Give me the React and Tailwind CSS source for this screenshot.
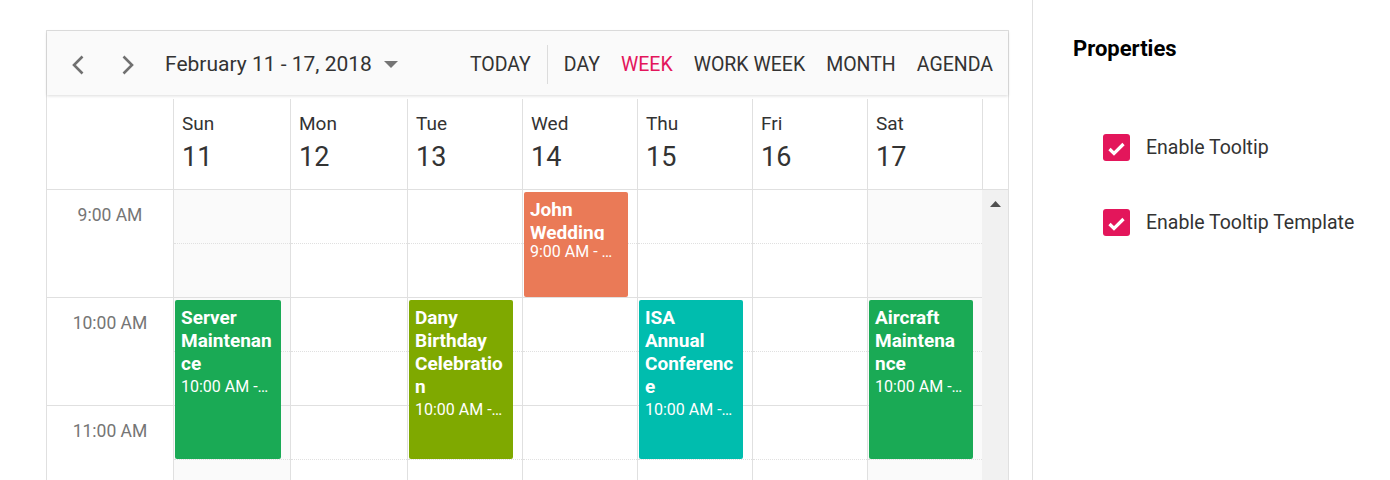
import React from 'react';

const days = [
  { name: 'Sun', date: 11, weekend: true, w: 'w-[117px]' },
  { name: 'Mon', date: 12, w: 'w-[117px]' },
  { name: 'Tue', date: 13, w: 'w-[115px]' },
  { name: 'Wed', date: 14, w: 'w-[115px]' },
  { name: 'Thu', date: 15, w: 'w-[115px]' },
  { name: 'Fri', date: 16, w: 'w-[115px]' },
  { name: 'Sat', date: 17, weekend: true, w: 'w-[115px]' },
];

// subject lines are kept as they wrap inside the narrow appointment cells
const events = [
  { day: 0, lines: ['Server', 'Maintenan', 'ce'], time: '10:00 AM - 11:30 AM', start: 10, end: 11.5, color: 'bg-[#1aaa55]' },
  { day: 2, lines: ['Dany', 'Birthday', 'Celebratio', 'n'], time: '10:00 AM - 11:30 AM', start: 10, end: 11.5, color: 'bg-[#7fa900]' },
  { day: 3, lines: ['John', 'Wedding'], time: '9:00 AM - 10:00 AM', start: 9, end: 10, color: 'bg-[#ea7a57]', clip: true },
  { day: 4, lines: ['ISA', 'Annual', 'Conferenc', 'e'], time: '10:00 AM - 11:30 AM', start: 10, end: 11.5, color: 'bg-[#00bdae]' },
  { day: 6, lines: ['Aircraft', 'Maintena', 'nce'], time: '10:00 AM - 11:30 AM', start: 10, end: 11.5, color: 'bg-[#1aaa55]' },
];

const HOUR = 108;

function Chevron({ flip }) {
  return (
    <svg width="14" height="20" viewBox="0 0 14 20" fill="none" stroke="#707070" strokeWidth="2.6">
      <path d={flip ? 'M2.5 1.5 L11 10 L2.5 18.5' : 'M11.5 1.5 L3 10 L11.5 18.5'} />
    </svg>
  );
}

function CheckRow({ label, className }) {
  return (
    <div className={`flex items-center ${className}`}>
      <span className="flex h-[27px] w-[27px] items-center justify-center rounded-[3px] bg-[#e3165b]">
        <svg width="27" height="27" viewBox="0 0 27 27" fill="none" stroke="white" strokeWidth="3.2">
          <path d="M6.5 15 L11 19.5 L20.5 10" />
        </svg>
      </span>
      <span className="ml-[16px] text-[19.5px] leading-[27px] text-[#333]">{label}</span>
    </div>
  );
}

export default function App() {
  return (
    <div className="flex h-[480px] w-[1390px] overflow-hidden bg-white font-[Roboto,sans-serif]">
      {/* Scheduler */}
      <div className="w-[1032px] shrink-0 pl-[46px] pt-[30px]">
        <div className="w-[963px] border border-[#e0e0e0]">
          {/* Toolbar */}
          <div className="relative z-10 flex h-[64px] items-center bg-[#fafafa] pl-[24px] pr-[15px] pt-[3px] shadow-[0_1px_3px_rgba(0,0,0,0.14)]">
            <Chevron />
            <span className="ml-[36px] flex">
              <Chevron flip />
            </span>
            <span className="ml-[30px] text-[21px] text-[#333]">February 11 - 17, 2018</span>
            <svg className="ml-[12px]" width="14" height="7" viewBox="0 0 14 7">
              <polygon points="0,0 14,0 7,7" fill="#757575" />
            </svg>
            <div className="ml-auto flex items-center text-[19.5px] text-[#333]">
              <span>TODAY</span>
              <span className="mx-[16px] h-[39px] w-px bg-[#dcdcdc]" />
              <div className="flex gap-[21px]">
                <span>DAY</span>
                <span className="text-[#e3165b]">WEEK</span>
                <span>WORK WEEK</span>
                <span>MONTH</span>
                <span>AGENDA</span>
              </div>
            </div>
          </div>

          {/* Date header */}
          <div className="flex h-[95px] border-b border-[#e0e0e0]">
            <div className="w-[126px] shrink-0" />
            {days.map((d) => (
              <div key={d.name} className={`mt-[4px] shrink-0 border-l border-[#e0e0e0] pl-[8px] pt-[13px] text-[#333] ${d.w}`}>
                <div className="text-[19px] leading-[24px]">{d.name}</div>
                <div className="mt-[5px] text-[27px] leading-[32px]">{d.date}</div>
              </div>
            ))}
            <div className="mt-[4px] w-[26px] shrink-0 border-l border-[#e0e0e0]" />
          </div>

          {/* Body */}
          <div className="flex">
            <div className="w-[126px] shrink-0">
              {['9:00 AM', '10:00 AM', '11:00 AM'].map((t) => (
                <div key={t} className="h-[108px] border-b border-[#e0e0e0] pt-[13px] text-center text-[17.5px] leading-[24px] text-[#757575]">
                  {t}
                </div>
              ))}
            </div>
            {days.map((d, i) => (
              <div key={d.name} className={`relative shrink-0 border-l border-[#e0e0e0] ${d.w} ${d.weekend ? 'bg-[#fafafa]' : 'bg-white'}`}>
                {[0, 1, 2, 3, 4, 5].map((s) => (
                  <div
                    key={s}
                    className={`h-[54px] border-b border-[#e0e0e0] ${s % 2 === 0 ? 'border-dotted' : 'border-solid'}`}
                  />
                ))}
                {events
                  .filter((e) => e.day === i)
                  .map((e) => (
                    <div
                      key={e.time + e.day}
                      className={`absolute left-[1px] right-[9px] overflow-hidden rounded-[2px] pl-[6px] pr-[10px] pt-[6px] text-white ${e.color}`}
                      style={{ top: (e.start - 9) * HOUR + 2, height: (e.end - e.start) * HOUR - 3 }}
                    >
                      <div className={`text-[19px] font-bold leading-[23px] ${e.clip ? 'max-h-[42px] overflow-hidden' : ''}`}>
                        {e.lines.map((l) => (
                          <div key={l} className="whitespace-nowrap">{l}</div>
                        ))}
                      </div>
                      <div className="truncate text-[16px] leading-[23px]">{e.time}</div>
                    </div>
                  ))}
              </div>
            ))}
            <div className="flex w-[26px] shrink-0 justify-center bg-[#f1f1f1] pt-[11px]">
              <svg width="11" height="6" viewBox="0 0 11 6">
                <polygon points="0,6 11,6 5.5,0" fill="#505050" />
              </svg>
            </div>
          </div>
        </div>
      </div>

      {/* Properties panel */}
      <div className="flex-1 border-l border-[#e0e0e0] pl-[40px] pt-[36px]">
        <div className="text-[22px] font-bold leading-[26px] text-black">Properties</div>
        <CheckRow label="Enable Tooltip" className="ml-[30px] mt-[72px]" />
        <CheckRow label="Enable Tooltip Template" className="ml-[30px] mt-[48px]" />
      </div>
    </div>
  );
}
